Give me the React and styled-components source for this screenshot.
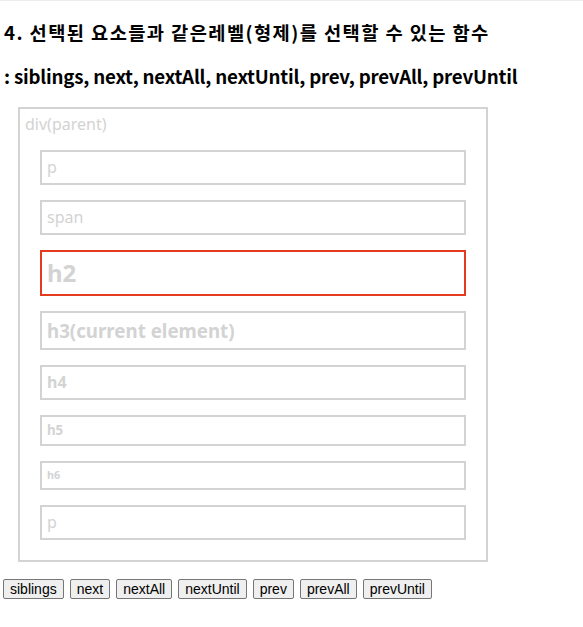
import React from 'react';
import styled, { createGlobalStyle } from 'styled-components';

const GlobalStyle = createGlobalStyle`
  html, body {
    margin: 0;
    padding: 0;
    background: #fff;
  }
  body {
    font-family: "Noto Sans", "Noto Sans CJK KR", sans-serif;
    color: #000;
  }
`;

const Page = styled.div`
  border-top: 1px solid #ececec;
  padding: 0 3px;
`;

const Title = styled.h3`
  margin: 18px 0 19px 1px;
  font-size: 18.72px;
  line-height: 25px;
  font-weight: bold;
  font-family: "Noto Sans CJK KR", "Noto Sans", sans-serif;
  letter-spacing: ${({ $spacing }) => $spacing || '-0.2px'};
  white-space: nowrap;
`;

const Parent = styled.div`
  width: 456px;
  margin: 0 15px;
  padding: 5px;
  border: 2px solid lightgrey;
  color: lightgrey;
  font-size: 16px;
  line-height: 21px;
`;

const sizes = {
  p: { font: 16, line: 21, weight: 'normal' },
  span: { font: 16, line: 21, weight: 'normal' },
  h2: { font: 24, line: 32, weight: 'bold' },
  h3: { font: 18.72, line: 25, weight: 'bold' },
  h4: { font: 16, line: 21, weight: 'bold' },
  h5: { font: 13.28, line: 17, weight: 'bold' },
  h6: { font: 10.72, line: 15, weight: 'bold' },
};

const Child = styled.div`
  margin: 15px;
  padding: 5px;
  border: 2px solid ${({ $active }) => ($active ? '#e43b1f' : 'lightgrey')};
  color: lightgrey;
  font-size: ${({ $tag }) => sizes[$tag].font}px;
  line-height: ${({ $tag }) => sizes[$tag].line}px;
  font-weight: ${({ $tag }) => sizes[$tag].weight};
`;

const ButtonRow = styled.div`
  display: flex;
  gap: 6px;
  margin-top: 17px;
`;

const Button = styled.button`
  height: 20px;
  padding: 0 6px;
  border: 1px solid #767676;
  border-radius: 2px;
  background: #efefef;
  color: #000;
  font-family: "Liberation Sans", Arial, sans-serif;
  font-size: 14px;
  line-height: 18px;
  cursor: pointer;
`;

const children = [
  { tag: 'p', text: 'p' },
  { tag: 'span', text: 'span' },
  { tag: 'h2', text: 'h2', active: true },
  { tag: 'h3', text: 'h3(current element)' },
  { tag: 'h4', text: 'h4' },
  { tag: 'h5', text: 'h5' },
  { tag: 'h6', text: 'h6' },
  { tag: 'p', text: 'p' },
];

const methods = ['siblings', 'next', 'nextAll', 'nextUntil', 'prev', 'prevAll', 'prevUntil'];

export default function App() {
  return (
    <Page>
      <GlobalStyle />
      <Title $spacing="1.4px">4. 선택된 요소들과 같은레벨(형제)를 선택할 수 있는 함수</Title>
      <Title>: siblings, next, nextAll, nextUntil, prev, prevAll, prevUntil</Title>
      <Parent>
        div(parent)
        {children.map((c, i) => (
          <Child key={i} $tag={c.tag} $active={c.active}>
            {c.text}
          </Child>
        ))}
      </Parent>
      <ButtonRow>
        {methods.map((m) => (
          <Button key={m}>{m}</Button>
        ))}
      </ButtonRow>
    </Page>
  );
}
